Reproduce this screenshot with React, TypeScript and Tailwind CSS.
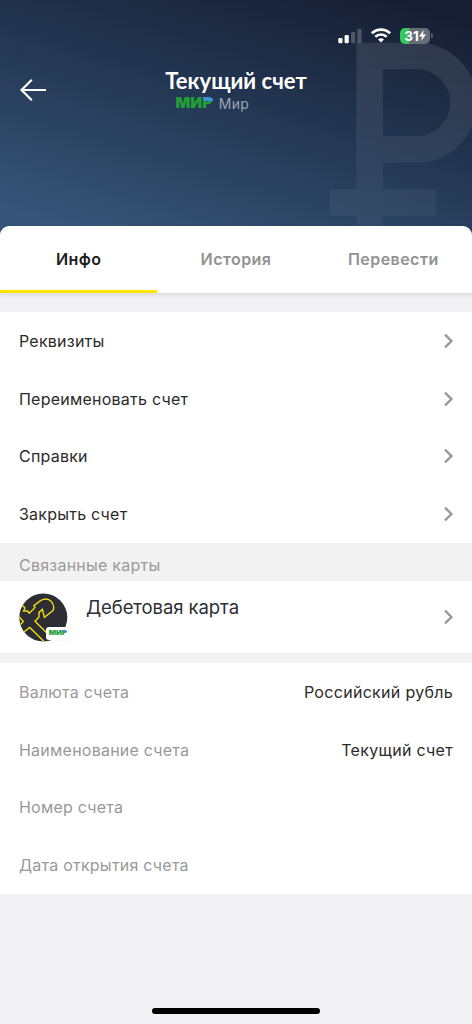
import React, { useState } from 'react';
import clsx from 'clsx';

const TABS = ['Инфо', 'История', 'Перевести'];

const ACTIONS = ['Реквизиты', 'Переименовать счет', 'Справки', 'Закрыть счет'];

const DETAILS = [
  { label: 'Валюта счета', value: 'Российский рубль' },
  { label: 'Наименование счета', value: 'Текущий счет' },
  { label: 'Номер счета', value: '' },
  { label: 'Дата открытия счета', value: '' },
];

const Chevron = () => (
  <svg className="w-3 h-4 shrink-0" viewBox="0 0 12 16" fill="none" stroke="#999999" strokeWidth="2.4">
    <path d="M3 1.6 9.4 8 3 14.4" />
  </svg>
);

const MirLogo = ({ className }: { className?: string }) => (
  <svg className={clsx('overflow-visible', className)} viewBox="0 0 37 11">
    <text
      x="-0.5"
      y="10.6"
      textLength="37"
      lengthAdjust="spacingAndGlyphs"
      fill="#21a038"
      className="font-['Inter'] text-[14px] font-black tracking-normal"
    >
      МИР
    </text>
    <path d="M26.4 .3H33.4q3.8 0 3.8 3.7H31q-3.4 0-4.6-3.7z" fill="#418ee8" />
  </svg>
);

function StatusBar() {
  return (
    <div className="flex justify-end items-center h-[17px] pr-[39px]">
      <svg className="w-6 h-4" viewBox="0 0 24 16" fill="#fff">
        <rect x=".3" y="10" width="4.2" height="5.2" rx="1.2" />
        <rect x="6.6" y="7" width="4.2" height="8.2" rx="1.2" />
        <rect x="13" y="4" width="4.2" height="11.2" rx="1.2" opacity=".22" />
        <rect x="19.3" y=".8" width="4.2" height="14.4" rx="1.2" opacity=".22" />
      </svg>
      <svg className="w-5 h-[15px] ml-[9px]" viewBox="0 0 20 15" fill="none" stroke="#fff" strokeWidth="2.6">
        <path d="M.9 5.3a13 13 0 0 1 18.2 0" />
        <path d="M4.3 8.8a8.2 8.2 0 0 1 11.4 0" />
        <path d="M7 11.6a4.3 4.3 0 0 1 6 0L10 14.6z" fill="#fff" stroke="none" />
      </svg>
      <div className="flex items-center ml-[9px]">
        <div className="flex items-center justify-center w-[30px] h-4 rounded-[5px] bg-[linear-gradient(90deg,#34c759_30%,#656d79_30%)] font-['Inter'] text-[13.5px] leading-4 tracking-normal font-bold text-white">
          31
          <svg className="w-[7px] h-[11px]" viewBox="0 0 7 10" preserveAspectRatio="none" fill="#fff">
            <path d="M4.7 0 0 5.8h3L2.2 10 7 4.2H4z" />
          </svg>
        </div>
        <div className="w-[2px] h-[5px] ml-px rounded-r-full bg-[#59616f]" />
      </div>
    </div>
  );
}

function CardIcon() {
  return (
    <div className="relative w-[49px] h-[49px] shrink-0">
      <svg className="w-[49px] h-[49px]" viewBox="0 0 49 49">
        <defs>
          <clipPath id="disc">
            <circle cx="24.3" cy="24.5" r="24" />
          </clipPath>
        </defs>
        <g clipPath="url(#disc)">
          <rect width="49" height="49" fill="#2d2e35" />
          <g fill="none" stroke="#f2dc0a" strokeWidth="1.4">
            <path d="M2 11 6 15 4.6 18H8.5L10.3 20.3 16 14.4 14.8 12.6 21.5 7.6Q28 4 32.4 8.6 36 13 34 17.6L25.4 24.3 23.4 16.3 20 19.4V24L16 28.3 38 50" />
            <path d="M0 23.5 4.3 28.5 0 33" />
            <path d="M-1 40 3.5 40 10.8 34.4 27 50.5" />
          </g>
        </g>
      </svg>
      <div className="absolute left-[27px] top-[34px] w-[23px] h-[13px] rounded-[3px] bg-white shadow-[0_0_1px_rgba(0,0,0,0.25)] flex items-center justify-center">
        <MirLogo className="w-[18px] h-[6px]" />
      </div>
    </div>
  );
}

export default function App() {
  const [tab, setTab] = useState(0);

  return (
    <div className="relative w-full h-[1024px] overflow-hidden bg-[#f2f2f4] font-['Inter',sans-serif] text-[16px] tracking-[0.23px] text-[#2b2b2b]">
      {/* Header */}
      <header className="relative h-[240px] pt-[27px] bg-[linear-gradient(197deg,#171e32_6%,#22344f_42%,#365579_92%)]">
        <svg className="absolute right-0 top-0 w-[152px] h-[240px]" viewBox="320 0 152 240">
          <defs>
            <linearGradient id="fade" gradientUnits="userSpaceOnUse" x1="0" y1="40" x2="0" y2="226">
              <stop stopColor="#fff" stopOpacity=".1" />
              <stop offset="1" stopColor="#fff" stopOpacity=".035" />
            </linearGradient>
          </defs>
          <g fill="none" stroke="url(#fade)" strokeWidth="26.6">
            <path d="M369.6 240V56H417a46.6 46.6 0 0 1 0 93.2H383" />
            <path d="M330 202.5H356.3M382.9 202.5H436.5" strokeWidth="26.61" />
          </g>
        </svg>
        <div className="relative">
          <StatusBar />
          <div className="relative flex flex-col items-center pt-[23px]">
            <button className="absolute left-5 top-[34px]">
              <svg className="w-[27px] h-[23px]" viewBox="0 0 27 23" fill="none" stroke="#fff" strokeWidth="2.2">
                <path d="M26 12H1.5M11.8 1.8 1.5 12l10.3 10.2" />
              </svg>
            </button>
            <h1 className="font-['Lato'] font-bold text-[22px] leading-[28px] tracking-normal text-white whitespace-nowrap">Текущий счет</h1>
            <div className="flex items-center h-5 mr-[47px] -mt-[2px] text-[14px] tracking-[0.3px] text-[#9aa4b2]">
              <MirLogo className="w-[37px] h-[11px] mr-[6px] -mt-px" />
              Мир
            </div>
          </div>
        </div>
      </header>

      {/* Tabs */}
      <nav className="relative grid grid-cols-3 h-[67px] -mt-[14px] bg-white rounded-t-[9px] shadow-[0_2px_5px_rgba(0,0,0,0.1)]">
        {TABS.map((name, i) => (
          <button
            key={name}
            onClick={() => setTab(i)}
            className={clsx(
              'border-b-3 pt-px font-semibold tracking-[0.45px]',
              tab === i ? 'border-[#ffe600] text-[#1c1c1e]' : 'border-transparent text-[#929292]'
            )}
          >
            {name}
          </button>
        ))}
      </nav>

      <section className="mt-[19px] bg-white">
        {ACTIONS.map((action) => (
          <div key={action} className="flex items-center justify-between h-[57.75px] pl-[19px] pr-[18px]">
            <span>{action}</span>
            <Chevron />
          </div>
        ))}
      </section>

      {/* Linked cards */}
      <h2 className="h-[38px] pl-[19px] pt-[6px] leading-8 bg-[#f2f2f2] text-[#999999]">Связанные карты</h2>
      <section className="flex items-center h-[72px] pl-[19px] pr-[18px] bg-white">
        <CardIcon />
        <span className="flex-1 ml-[18px] mb-[18px] text-[18.5px] tracking-[-0.08px] text-[#2d2e35]">Дебетовая карта</span>
        <Chevron />
      </section>

      <section className="mt-[10px] bg-white">
        {DETAILS.map(({ label, value }) => (
          <div key={label} className="flex items-center justify-between h-[57.75px] px-[19px]">
            <span className="text-[#999999]">{label}</span>
            <span className="tracking-[0.3px]">{value}</span>
          </div>
        ))}
      </section>

      {/* Home indicator */}
      <div className="absolute bottom-[10px] left-[152px] w-[168px] h-[6px] rounded-full bg-black" />
    </div>
  );
}
